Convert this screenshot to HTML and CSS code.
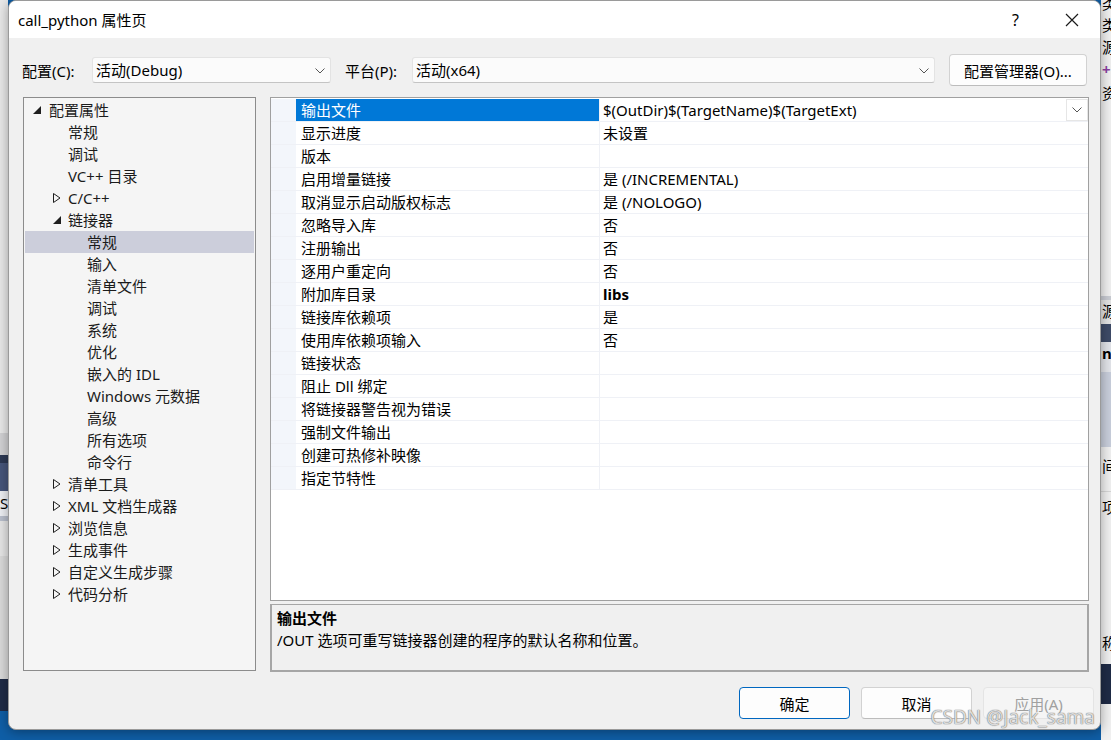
FILE: index.html
```html
<!DOCTYPE html>
<html lang="zh-CN">
<head>
    <meta charset="UTF-8">
    <title>call_python 属性页</title>
    <link rel="stylesheet" href="styles.css">
</head>
<body>

<div class="desktop">
    <div class="side side-left">
        <div class="sl sl-1"></div>
        <div class="sl sl-2"></div>
        <div class="sl sl-3"></div>
        <div class="sl sl-4"></div>
        <div class="sl sl-5">S</div>
        <div class="sl sl-6"></div>
        <div class="sl sl-7"></div>
        <div class="sl sl-8"></div>
        <div class="sl sl-9"></div>
    </div>

    <div class="dialog">
        <div class="titlebar">
            <span class="title">call_python 属性页</span>
            <span class="title-help">?</span>
            <svg class="title-close" width="14" height="14" viewBox="0 0 14 14">
                <path d="M1 1 L13 13 M13 1 L1 13" stroke="#1a1a1a" stroke-width="1.2" fill="none"/>
            </svg>
        </div>

        <div class="config-row">
            <label class="cfg-label">配置(C):</label>
            <div class="combo combo-config">
                <span>活动(Debug)</span>
                <svg class="chev" width="10" height="6" viewBox="0 0 10 6"><polyline points="0.5,0.5 5,5 9.5,0.5" fill="none" stroke="#555" stroke-width="1"/></svg>
            </div>
            <label class="cfg-label plat">平台(P):</label>
            <div class="combo combo-platform">
                <span>活动(x64)</span>
                <svg class="chev" width="10" height="6" viewBox="0 0 10 6"><polyline points="0.5,0.5 5,5 9.5,0.5" fill="none" stroke="#555" stroke-width="1"/></svg>
            </div>
            <button class="btn btn-manager">配置管理器(O)...</button>
        </div>

        <div class="main">
            <!-- 左侧树 -->
            <div class="tree">
                <div class="node lv0"><span class="tri tri-open"></span>配置属性</div>
                <div class="node lv1">常规</div>
                <div class="node lv1">调试</div>
                <div class="node lv1">VC++ 目录</div>
                <div class="node lv1"><svg class="tri" width="8" height="10" viewBox="0 0 8 10"><path d="M0.5 0.5 L7 5 L0.5 9.5 Z" fill="none" stroke="#1e1e1e"/></svg>C/C++</div>
                <div class="node lv1"><span class="tri tri-open"></span>链接器</div>
                <div class="node lv2 selected">常规</div>
                <div class="node lv2">输入</div>
                <div class="node lv2">清单文件</div>
                <div class="node lv2">调试</div>
                <div class="node lv2">系统</div>
                <div class="node lv2">优化</div>
                <div class="node lv2">嵌入的 IDL</div>
                <div class="node lv2">Windows 元数据</div>
                <div class="node lv2">高级</div>
                <div class="node lv2">所有选项</div>
                <div class="node lv2">命令行</div>
                <div class="node lv1"><svg class="tri" width="8" height="10" viewBox="0 0 8 10"><path d="M0.5 0.5 L7 5 L0.5 9.5 Z" fill="none" stroke="#1e1e1e"/></svg>清单工具</div>
                <div class="node lv1"><svg class="tri" width="8" height="10" viewBox="0 0 8 10"><path d="M0.5 0.5 L7 5 L0.5 9.5 Z" fill="none" stroke="#1e1e1e"/></svg>XML 文档生成器</div>
                <div class="node lv1"><svg class="tri" width="8" height="10" viewBox="0 0 8 10"><path d="M0.5 0.5 L7 5 L0.5 9.5 Z" fill="none" stroke="#1e1e1e"/></svg>浏览信息</div>
                <div class="node lv1"><svg class="tri" width="8" height="10" viewBox="0 0 8 10"><path d="M0.5 0.5 L7 5 L0.5 9.5 Z" fill="none" stroke="#1e1e1e"/></svg>生成事件</div>
                <div class="node lv1"><svg class="tri" width="8" height="10" viewBox="0 0 8 10"><path d="M0.5 0.5 L7 5 L0.5 9.5 Z" fill="none" stroke="#1e1e1e"/></svg>自定义生成步骤</div>
                <div class="node lv1"><svg class="tri" width="8" height="10" viewBox="0 0 8 10"><path d="M0.5 0.5 L7 5 L0.5 9.5 Z" fill="none" stroke="#1e1e1e"/></svg>代码分析</div>
            </div>

            <!-- 右侧属性表 -->
            <div class="right">
                <div class="grid">
                    <div class="row">
                        <div class="margin"></div>
                        <div class="name active">输出文件</div>
                        <div class="value">$(OutDir)$(TargetName)$(TargetExt)
                            <span class="drop"><svg width="10" height="6" viewBox="0 0 10 6"><polyline points="0.5,0.5 5,5 9.5,0.5" fill="none" stroke="#555" stroke-width="1"/></svg></span>
                        </div>
                    </div>
                    <div class="row"><div class="margin"></div><div class="name">显示进度</div><div class="value">未设置</div></div>
                    <div class="row"><div class="margin"></div><div class="name">版本</div><div class="value"></div></div>
                    <div class="row"><div class="margin"></div><div class="name">启用增量链接</div><div class="value">是 (/INCREMENTAL)</div></div>
                    <div class="row"><div class="margin"></div><div class="name">取消显示启动版权标志</div><div class="value">是 (/NOLOGO)</div></div>
                    <div class="row"><div class="margin"></div><div class="name">忽略导入库</div><div class="value">否</div></div>
                    <div class="row"><div class="margin"></div><div class="name">注册输出</div><div class="value">否</div></div>
                    <div class="row"><div class="margin"></div><div class="name">逐用户重定向</div><div class="value">否</div></div>
                    <div class="row"><div class="margin"></div><div class="name">附加库目录</div><div class="value bold">libs</div></div>
                    <div class="row"><div class="margin"></div><div class="name">链接库依赖项</div><div class="value">是</div></div>
                    <div class="row"><div class="margin"></div><div class="name">使用库依赖项输入</div><div class="value">否</div></div>
                    <div class="row"><div class="margin"></div><div class="name">链接状态</div><div class="value"></div></div>
                    <div class="row"><div class="margin"></div><div class="name">阻止 Dll 绑定</div><div class="value"></div></div>
                    <div class="row"><div class="margin"></div><div class="name">将链接器警告视为错误</div><div class="value"></div></div>
                    <div class="row"><div class="margin"></div><div class="name">强制文件输出</div><div class="value"></div></div>
                    <div class="row"><div class="margin"></div><div class="name">创建可热修补映像</div><div class="value"></div></div>
                    <div class="row"><div class="margin"></div><div class="name">指定节特性</div><div class="value"></div></div>
                </div>
                <div class="desc">
                    <div class="desc-title">输出文件</div>
                    <div class="desc-text">/OUT 选项可重写链接器创建的程序的默认名称和位置。</div>
                </div>
            </div>
        </div>

        <div class="buttons">
            <button class="btn btn-ok">确定</button>
            <button class="btn">取消</button>
            <button class="btn btn-disabled">应用(A)</button>
        </div>

        <div class="watermark">CSDN @Jack_sama</div>
    </div>

    <div class="side side-right">
        <div class="sr sr-1">类</div>
        <div class="sr sr-2">类</div>
        <div class="sr sr-3">源</div>
        <div class="sr sr-4 plus">+</div>
        <div class="sr sr-5">资</div>
        <div class="sr sr-6"></div>
        <div class="sr sr-7">源</div>
        <div class="sr sr-8"></div>
        <div class="sr sr-9">n</div>
        <div class="sr sr-10"></div>
        <div class="sr sr-11">间</div>
        <div class="sr sr-12">项</div>
        <div class="sr sr-13"></div>
        <div class="sr sr-14">称</div>
        <div class="sr sr-15"></div>
    </div>
</div>

</body>
</html>
```

FILE: styles.css
```css
/* 基础 */
* {
    margin: 0;
    padding: 0;
    box-sizing: border-box;
}

body {
    width: 1111px;
    height: 740px;
    overflow: hidden;
    background-color: #0f5ea6;
    font-family: "Noto Sans", "Noto Sans CJK SC", sans-serif;
    font-size: 15px;
    color: #000;
}

.desktop {
    display: grid;
    grid-template-columns: 8px 1093px 10px;
    height: 740px;
    align-items: start;
}

/* 两侧的背景窗口 */
.side {
    display: flex;
    flex-direction: column;
    overflow: hidden;
    height: 740px;
}

.sl { flex: none; }
.sl-1 { height: 433px; background: #e9e9e9; }
.sl-2 { height: 22px; background: #d2d2d4; }
.sl-3 { height: 8px; background: #2c3853; }
.sl-4 { height: 28px; background: #46557a; }
.sl-5 { height: 25px; background: #eef0f4; font-size: 15px; line-height: 25px; }
.sl-6 { height: 5px; background: #b9bfcc; }
.sl-7 { height: 35px; background: #e6e6e6; }
.sl-8 { height: 123px; background: #dadada; }
.sl-9 { height: 32px; background: #1f2b46; }

.side-right {
    background: #f0f0f0;
}

.sr {
    flex: none;
    font-size: 15px;
    line-height: 22px;
    padding-left: 1px;
    white-space: nowrap;
}
.sr-1 { height: 14px; line-height: 6px; }
.sr-2 { height: 22px; }
.sr-3 { height: 22px; }
.sr-4 { height: 24px; color: #8a3fa0; font-weight: bold; }
.sr-5 { height: 24px; }
.sr-6 { height: 190px; }
.sr-7 { height: 28px; background: #e4e4e4; border-top: 4px solid #c9ccd3; }
.sr-8 { height: 18px; background: #3e4b67; }
.sr-9 { height: 30px; background: #e2e4e9; font-weight: bold; }
.sr-10 { height: 75px; background: #c8cedb; }
.sr-11 { height: 45px; line-height: 38px; border-bottom: 1px solid #d6d6d6; }
.sr-12 { height: 140px; line-height: 30px; }
.sr-13 { height: 0; }
.sr-14 { height: 32px; }
.sr-15 { height: 40px; background: #1f2b46; }

/* 对话框 */
.dialog {
    position: relative;
    height: 730px;
    background-color: #f0f0f0;
    border: 1px solid #9a9a9a;
    border-radius: 8px;
    overflow: hidden;
    box-shadow: 0 2px 12px rgba(0, 0, 0, 0.35);
}

.titlebar {
    height: 37px;
    background-color: #fff;
    display: flex;
    align-items: center;
    padding-left: 9px;
}

.title {
    flex: 1;
    font-size: 15px;
}

.title-help {
    font-size: 16px;
    margin-right: 46px;
}

.title-close {
    margin-right: 21px;
}

/* 配置行 */
.config-row {
    display: flex;
    align-items: center;
    height: 32px;
    margin-top: 16px;
    padding-left: 13px;
}

.cfg-label {
    width: 70px;
}

.cfg-label.plat {
    width: 67px;
    margin-left: 14px;
}

.combo {
    position: relative;
    height: 26px;
    background-color: #fbfbfb;
    border: 1px solid #e3e3e3;
    border-bottom-color: #c4c4c4;
    border-radius: 3px;
    padding-left: 3px;
    line-height: 24px;
}

.combo-config { width: 239px; }
.combo-platform { width: 523px; }

.combo .chev {
    position: absolute;
    right: 5px;
    top: 10px;
}

.btn {
    height: 32px;
    background-color: #fdfdfd;
    border: 1px solid #d2d2d2;
    border-bottom-color: #bcbcbc;
    border-radius: 4px;
    font-family: inherit;
    font-size: 15px;
    color: #000;
}

.btn-manager {
    width: 138px;
    margin-left: 14px;
}

/* 主区域 */
.main {
    display: grid;
    grid-template-columns: 233px 819px;
    gap: 14px;
    margin-top: 11px;
    padding-left: 14px;
    height: 575px;
}

.tree {
    background-color: #f5f5f5;
    border: 1px solid #8c8c8c;
    padding: 1px;
    height: 574px;
}

.node {
    position: relative;
    height: 22px;
    line-height: 22px;
    white-space: nowrap;
    color: #1b1b1b;
}

.node.lv0 { padding-left: 24px; }
.node.lv1 { padding-left: 43px; }
.node.lv2 { padding-left: 62px; }

.node.selected {
    background-color: #cccedb;
}

.tri {
    position: absolute;
    top: 6px;
}

.lv0 .tri { left: 8px; }
.lv1 .tri { left: 28px; }

.tri-open {
    top: 7px;
    width: 0;
    height: 0;
    border-left: 8px solid transparent;
    border-bottom: 8px solid #1e1e1e;
}

/* 属性表 */
.right {
    display: flex;
    flex-direction: column;
    gap: 3px;
}

.grid {
    height: 504px;
    background-color: #fff;
    border: 1px solid #a0a0a0;
    padding-top: 1px;
}

.row {
    display: grid;
    grid-template-columns: 25px 304px 1fr;
    height: 23px;
    border-bottom: 1px solid #eff1f6;
    line-height: 22px;
    white-space: nowrap;
}

.row .margin {
    background-color: #f3f6fb;
}

.row .name {
    padding-left: 5px;
    border-right: 1px solid #eff1f6;
}

.row .name.active {
    background-color: #0078d7;
    color: #fff;
}

.row .value {
    position: relative;
    padding-left: 3px;
}

.value.bold {
    font-weight: bold;
}

.drop {
    position: absolute;
    right: 0;
    top: 0;
    width: 22px;
    height: 22px;
    background-color: #fff;
    border: 1px solid #e6e6e6;
    display: flex;
    align-items: center;
    justify-content: center;
}

.desc {
    height: 68px;
    border: 2px solid #a6a6a6;
    border-top-width: 1px;
    padding: 2px 5px;
    background-color: #f0f0f0;
}

.desc-title {
    font-weight: bold;
    line-height: 22px;
}

.desc-text {
    line-height: 22px;
}

/* 底部按钮 */
.buttons {
    display: flex;
    justify-content: flex-end;
    gap: 11px;
    margin-top: 15px;
    padding-right: 6px;
}

.buttons .btn {
    width: 111px;
}

.btn-ok {
    border: 1px solid #0067c0;
}

.btn-disabled {
    color: #a0a0a0;
    background-color: #f5f5f5;
    border-color: #e4e4e4;
}

.watermark {
    position: absolute;
    right: 5px;
    bottom: 0;
    font-size: 19px;
    line-height: 24px;
    color: rgba(255, 255, 255, 0.75);
    text-shadow: 0 0 1px #6f6f6f, 0 0 1px #6f6f6f;
}
```
